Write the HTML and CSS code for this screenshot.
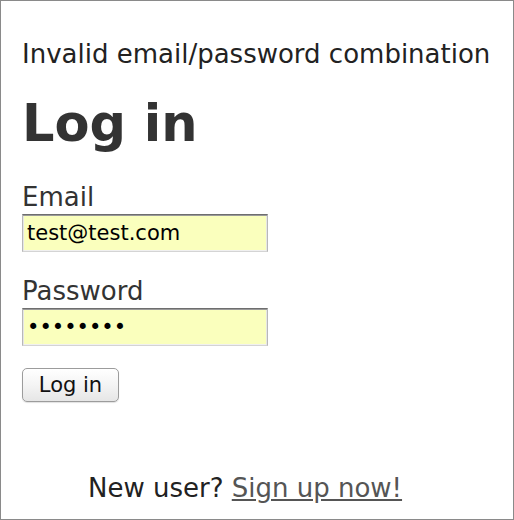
FILE: index.html
```html
<!DOCTYPE html>
<html>
<head>
<meta charset="utf-8">
<link rel="stylesheet" href="styles.css">
</head>
<body>
<div class="frame">
  <p class="flash">Invalid email/password combination</p>
  <h1 class="title">Log in</h1>
  <form class="form">
    <label class="label" for="email">Email</label>
    <input class="field" id="email" type="text" value="test@test.com">
    <label class="label label-pw" for="pw">Password</label>
    <input class="field" id="pw" type="password" value="password">
    <button class="btn" type="button">Log in</button>
  </form>
  <p class="signup">New user? <a class="link" href="#">Sign up now!</a></p>
</div>
</body>
</html>
```
FILE: styles.css
```css
html, body { margin: 0; padding: 0; background: #fff; }
.frame {
  width: 514px; height: 520px; box-sizing: border-box;
  border: 1px solid #8a8a8a;
  padding: 38px 0 0 21px;
  font-family: "DejaVu Sans", Verdana, sans-serif;
  color: #333;
}
.flash { margin: 0; font-size: 26px; line-height: 30px; color: #222; }
.title { margin: 25px 0 0; font-size: 51px; line-height: 60px; font-weight: bold; color: #333; }
.form { display: flex; flex-direction: column; align-items: flex-start; margin-top: 28px; }
.label { font-size: 26px; line-height: 30px; color: #333; margin-bottom: 2px; }
.label-pw { margin-top: 24px; }
.field {
  width: 246px; height: 38px; box-sizing: border-box; margin: 0;
  border: 1px solid; border-color: #6e6e6e #b8b8b8 #d4d4d4 #b8b8b8;
  box-shadow: inset 0 1px 0 #9a9a9a, inset 1px 0 0 #e6e6e6, inset -1px 0 0 #e6e6e6, inset 0 -1px 0 #f0f0f0;
  background: #faffbd; padding: 0 4px;
  font-family: "DejaVu Sans", Verdana, sans-serif; font-size: 21px; color: #000;
  outline: none;
}
.btn {
  margin-top: 22px;
  width: 97px; height: 34px; box-sizing: border-box;
  border: 1px solid #9c9c9c; border-radius: 5px;
  background: linear-gradient(#ffffff, #f4f4f4 50%, #e6e6e6);
  font-family: "DejaVu Sans", Verdana, sans-serif; font-size: 21px; color: #111;
  padding: 0; box-shadow: 0 1px 1px rgba(0,0,0,0.12);
}
.signup { margin: 71px 0 0 66px; font-size: 26px; line-height: 30px; color: #222; }
.link { color: #555; }
```
